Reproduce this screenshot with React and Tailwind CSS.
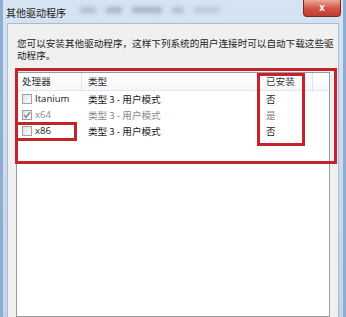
import React from 'react';

const rows = [
  { name: 'Itanium', type: '类型 3 - 用户模式', installed: '否', checked: false, muted: false },
  { name: 'x64', type: '类型 3 - 用户模式', installed: '是', checked: true, muted: true },
  { name: 'x86', type: '类型 3 - 用户模式', installed: '否', checked: false, muted: false },
];

const Checkbox = ({ checked, muted }) => (
  <span className="w-[10px] h-[10px] border border-[#a0a0a0] bg-gradient-to-br from-[#e4e4e4] to-[#fafafa] flex items-center justify-center shrink-0">
    {checked && (
      <svg width="8" height="8" viewBox="0 0 8 8">
        <path d="M1 4 L3 6.3 L7 1.2" fill="none" stroke={muted ? '#8a8a8a' : '#333'} strokeWidth="1.4" />
      </svg>
    )}
  </span>
);

const App = () => {
  return (
    <div
      className="relative w-[346px] h-[317px] overflow-hidden flex flex-col bg-gradient-to-b from-[#d6e3f1] to-[#c2d4e9] border-l-[3px] border-r-[3px] border-[#8fadd2] text-[#1e1e1e]"
      style={{ fontFamily: '"Noto Sans CJK SC", "Liberation Sans", sans-serif' }}
    >
      {/* title bar */}
      <div className="h-[23px] flex items-start shrink-0">
        <span className="text-[10px] leading-none mt-[8px] ml-[3px] text-[#222]">其他驱动程序</span>
        <div className="flex items-center gap-[10px] ml-[14px] mt-[7px] opacity-50">
          <span className="w-[16px] h-[6px] bg-[#8c9aab] blur-[2px]" />
          <span className="w-[16px] h-[6px] bg-[#7a8898] blur-[2px]" />
          <span className="w-[30px] h-[6px] bg-[#76869a] blur-[2px]" />
          <span className="w-[12px] h-[6px] bg-[#8c9aab] blur-[2px]" />
          <span className="w-[26px] h-[6px] bg-[#a3b1c2] blur-[2px]" />
        </div>
        <div className="ml-auto mr-[2px] w-[38px] h-[17px] rounded-b-[4px] border border-t-0 border-[#7a2a24] bg-gradient-to-b from-[#e9a89b] via-[#d2574a] to-[#c23a2c] flex items-center justify-center">
          <span className="text-white text-[10px] font-bold leading-none" style={{ fontFamily: '"Liberation Sans", sans-serif' }}>x</span>
        </div>
      </div>

      {/* body */}
      <div className="flex-1 mx-[4px] bg-[#f0f0f0] border border-b-0 border-[#a9bcd3] flex flex-col">
        <p className="text-[9.6px] leading-[12px] text-[#222] pl-[9px] pr-[1px] pt-[13px]">
          您可以安装其他驱动程序，这样下列系统的用户连接时可以自动下载这些驱动程序。
        </p>

        <div className="flex-1 mx-[8px] mt-[11px] bg-white border border-[#9a9a9a] flex flex-col text-[9.6px]">
          <div className="h-[18px] flex items-center border-b border-[#e3e6ea] bg-gradient-to-b from-white to-[#f6f7f9] text-[#333]">
            <div className="w-[65px] pl-[5px] border-r border-[#e0e3e7] h-full flex items-center">处理器</div>
            <div className="w-[176px] pl-[6px] border-r border-[#e0e3e7] h-full flex items-center">类型</div>
            <div className="w-[55px] pl-[8px] border-r border-[#e0e3e7] h-full flex items-center">已安装</div>
          </div>
          <div>
            {rows.map((r) => (
              <div key={r.name} className={`h-[16px] flex items-center ${r.muted ? 'text-[#8a8a8a]' : 'text-[#1a1a1a]'}`}>
                <div className="w-[65px] pl-[5px] flex items-center gap-[3px]">
                  <Checkbox checked={r.checked} muted={r.muted} />
                  <span style={{ fontFamily: '"Open Sans", sans-serif' }}>{r.name}</span>
                </div>
                <div className="w-[176px] pl-[6px]">{r.type}</div>
                <div className="pl-[8px]">{r.installed}</div>
              </div>
            ))}
          </div>
        </div>
      </div>

      {/* red annotation boxes */}
      <div className="absolute left-[12px] top-[68px] w-[322px] h-[96px] border-[3px] border-[#c4232b]" />
      <div className="absolute left-[12px] top-[122px] w-[62px] h-[19px] border-[3px] border-[#c4232b]" />
      <div className="absolute left-[254px] top-[73px] w-[48px] h-[73px] border-[3px] border-[#c4232b]" />
    </div>
  );
};

export default App;
